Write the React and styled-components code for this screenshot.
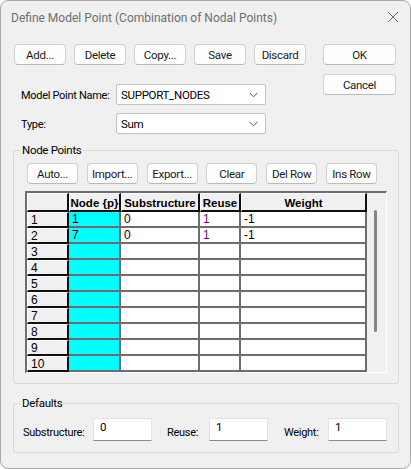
import React from 'react';
import styled, { createGlobalStyle } from 'styled-components';

const GlobalStyle = createGlobalStyle`
  html, body {
    margin: 0;
    padding: 0;
    background: #ffffff;
  }
  * {
    box-sizing: border-box;
  }
`;

const UI_FONT = `Roboto, "Noto Sans", "Liberation Sans", sans-serif`;
const GRID_FONT = `"Liberation Sans", Arial, sans-serif`;

const Window = styled.div`
  width: 411px;
  height: 469px;
  background: #f0f0f0;
  border: 1px solid #a9a9a9;
  border-radius: 8px;
  overflow: hidden;
  font-family: ${UI_FONT};
  font-size: 11px;
  letter-spacing: -0.3px;
  color: #000;
`;

const TitleBar = styled.div`
  height: 35px;
  display: flex;
  align-items: center;
  justify-content: space-between;
  padding: 0 10px 0 10px;
`;

const Title = styled.div`
  color: #6f6f6f;
  font-size: 12px;
  letter-spacing: 0;
  padding-bottom: 2px;
`;

const CloseIcon = () => (
  <svg width="12" height="12" viewBox="0 0 12 12" style={{ marginRight: 1, marginBottom: 4 }}>
    <path d="M1 1 L11 11 M11 1 L1 11" stroke="#6a6a6a" strokeWidth="1" fill="none" />
  </svg>
);

const Content = styled.div`
  padding: 8px 11px 0 12px;
`;

const TopArea = styled.div`
  display: flex;
  justify-content: space-between;
`;

const LeftColumn = styled.div`
  display: flex;
  flex-direction: column;
`;

const RightColumn = styled.div`
  display: flex;
  flex-direction: column;
  gap: 9px;
  margin-right: 3px;
`;

const ButtonRow = styled.div`
  display: flex;
  gap: ${(p) => p.gap || 8}px;
  margin-left: ${(p) => p.indent || 0}px;
`;

const Button = styled.div`
  width: ${(p) => p.w || 52}px;
  height: 21px;
  display: flex;
  align-items: center;
  justify-content: center;
  background: #fdfdfd;
  border: 1px solid #d0d0d0;
  border-bottom-color: #b9b9b9;
  border-radius: 4px;
  font-size: 11.5px;
  color: #1a1a1a;
  white-space: nowrap;
`;

const FormRow = styled.div`
  display: flex;
  align-items: center;
  margin-top: ${(p) => p.top}px;
  padding-left: 8px;
`;

const FormLabel = styled.div`
  width: 95px;
  white-space: nowrap;
  padding-top: 2px;
`;

const Combo = styled.div`
  width: 150px;
  height: 21px;
  background: #ffffff;
  border: 1px solid #c2c2c2;
  border-radius: 2px;
  display: flex;
  align-items: center;
  justify-content: space-between;
  padding: 0 7px 0 4px;
  font-size: 11.5px;
`;

const Chevron = () => (
  <svg width="9" height="6" viewBox="0 0 9 6">
    <polyline points="0.5,0.8 4.5,4.8 8.5,0.8" fill="none" stroke="#555" strokeWidth="1" />
  </svg>
);

const Group = styled.fieldset`
  margin: ${(p) => p.top}px 0 0 0;
  padding: 0;
  border: 1px solid #d9d9d9;
  border-radius: 3px;
  min-inline-size: 0;
`;

const Legend = styled.legend`
  margin-left: 6px;
  padding: 0 2px;
  font-size: 11.5px;
  line-height: 14px;
`;

const GroupBody = styled.div`
  padding: ${(p) => p.pad};
`;

const GridFrame = styled.div`
  margin-top: 7px;
  width: 362px;
  display: flex;
  border-top: 2px solid #6d6d6d;
  border-left: 2px solid #6d6d6d;
  border-right: 1px solid #ffffff;
  border-bottom: 1px solid #ffffff;
  font-family: ${GRID_FONT};
  font-size: 12px;
  letter-spacing: 0;
`;

const Sheet = styled.div`
  display: grid;
  grid-template-columns: 42px 52px 79px 41px 126px;
  grid-template-rows: 19px repeat(10, 16px);
`;

const HeadCell = styled.div`
  background: #f0f0f0;
  border-top: 1px solid #ffffff;
  border-left: 1px solid #ffffff;
  border-right: 2px solid #101010;
  border-bottom: 2px solid #101010;
  font-weight: bold;
  font-size: 11.5px;
  display: flex;
  align-items: center;
  justify-content: center;
  white-space: nowrap;
  overflow: visible;
  padding-top: 1px;
`;

const RowHead = styled.div`
  background: #f0f0f0;
  border-top: 1px solid #ffffff;
  border-left: 1px solid #ffffff;
  border-right: 2px solid #101010;
  border-bottom: 2px solid #101010;
  padding-left: 3px;
  line-height: 14px;
`;

const Cell = styled.div`
  background: ${(p) => (p.$key ? '#00ffff' : '#ffffff')};
  border-right: 2px solid #6d6d6d;
  border-bottom: 2px solid #6d6d6d;
  padding-left: 3px;
  line-height: 14px;
  color: ${(p) => p.$tone || '#000'};
`;

const ScrollArea = styled.div`
  width: 18px;
  display: flex;
  justify-content: center;
  padding-top: 17px;
  padding-right: 1px;
`;

const ScrollThumb = styled.div`
  width: 3px;
  height: 122px;
  background: #858585;
  border-radius: 2px;
`;

const DefaultsRow = styled.div`
  display: flex;
  align-items: center;
`;

const DefLabel = styled.div`
  width: ${(p) => p.w}px;
  margin-left: ${(p) => p.gap || 0}px;
  padding-top: 6px;
  white-space: nowrap;
`;

const TextBox = styled.div`
  width: 59px;
  height: 23px;
  background: #ffffff;
  border: 1px solid #e3e3e3;
  border-bottom: 1px solid #8a8a8a;
  padding: 1px 0 0 6px;
  line-height: 14px;
  font-size: 11.5px;
`;

const rows = [
  ['1', '0', '1', '-1'],
  ['7', '0', '1', '-1'],
  ...Array.from({ length: 8 }, () => ['', '', '', '']),
];

export default function App() {
  return (
    <>
      <GlobalStyle />
      <Window>
        <TitleBar>
          <Title>Define Model Point (Combination of Nodal Points)</Title>
          <CloseIcon />
        </TitleBar>
        <Content>
          <TopArea>
            <LeftColumn>
              <ButtonRow indent={1}>
                <Button>Add...</Button>
                <Button>Delete</Button>
                <Button>Copy...</Button>
                <Button>Save</Button>
                <Button>Discard</Button>
              </ButtonRow>
              <FormRow top={19}>
                <FormLabel>Model Point Name:</FormLabel>
                <Combo>
                  <span>SUPPORT_NODES</span>
                  <Chevron />
                </Combo>
              </FormRow>
              <FormRow top={8}>
                <FormLabel>Type:</FormLabel>
                <Combo>
                  <span>Sum</span>
                  <Chevron />
                </Combo>
              </FormRow>
            </LeftColumn>
            <RightColumn>
              <Button w={73}>OK</Button>
              <Button w={73}>Cancel</Button>
            </RightColumn>
          </TopArea>

          <Group top={9}>
            <Legend>Node Points</Legend>
            <GroupBody pad="6px 0 10px 11px">
              <ButtonRow indent={2} gap={8.8}>
                <Button w={51}>Auto...</Button>
                <Button w={51}>Import...</Button>
                <Button w={51}>Export...</Button>
                <Button w={51}>Clear</Button>
                <Button w={51}>Del Row</Button>
                <Button w={51}>Ins Row</Button>
              </ButtonRow>
              <GridFrame>
                <Sheet>
                  <HeadCell />
                  <HeadCell>Node {'{p}'}</HeadCell>
                  <HeadCell>Substructure</HeadCell>
                  <HeadCell>Reuse</HeadCell>
                  <HeadCell>Weight</HeadCell>
                  {rows.map((r, i) => (
                    <React.Fragment key={i}>
                      <RowHead>{i + 1}</RowHead>
                      <Cell $key>{r[0]}</Cell>
                      <Cell>{r[1]}</Cell>
                      <Cell $tone="#6e0a6e">{r[2]}</Cell>
                      <Cell>{r[3]}</Cell>
                    </React.Fragment>
                  ))}
                </Sheet>
                <ScrollArea>
                  <ScrollThumb />
                </ScrollArea>
              </GridFrame>
            </GroupBody>
          </Group>

          <Group top={12}>
            <Legend>Defaults</Legend>
            <GroupBody pad="8px 0 11px 9px">
              <DefaultsRow>
                <DefLabel w={70}>Substructure:</DefLabel>
                <TextBox>0</TextBox>
                <DefLabel w={42} gap={15}>Reuse:</DefLabel>
                <TextBox>1</TextBox>
                <DefLabel w={44} gap={16}>Weight:</DefLabel>
                <TextBox>1</TextBox>
              </DefaultsRow>
            </GroupBody>
          </Group>
        </Content>
      </Window>
    </>
  );
}
